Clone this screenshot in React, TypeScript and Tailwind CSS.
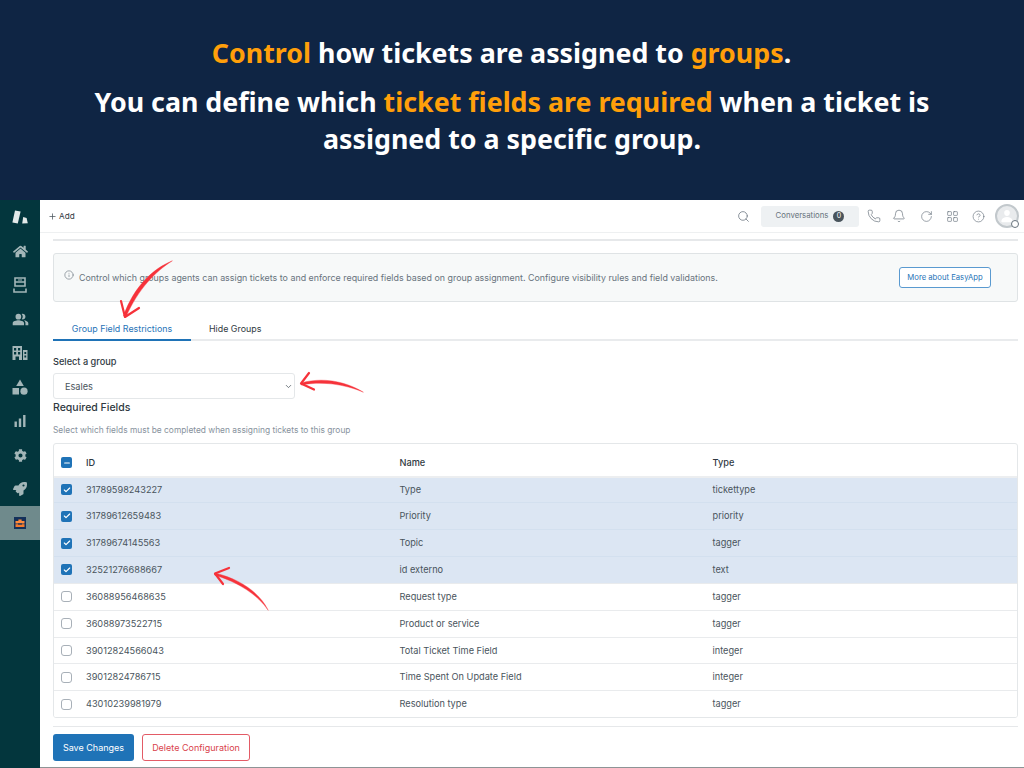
import { Search, Phone, Bell, RotateCw, LayoutGrid, CircleHelp, Info, ChevronDown, Plus, Check, Minus } from "lucide-react";
import { FaHome, FaRocket, FaCog } from "react-icons/fa";
import { MdPeopleAlt } from "react-icons/md";
import { IoPerson } from "react-icons/io5";

const rows = [
  { id: "31789598243227", name: "Type", type: "tickettype", on: true },
  { id: "31789612659483", name: "Priority", type: "priority", on: true },
  { id: "31789674145563", name: "Topic", type: "tagger", on: true },
  { id: "32521276688667", name: "id externo", type: "text", on: true },
  { id: "36088956468635", name: "Request type", type: "tagger", on: false },
  { id: "36088973522715", name: "Product or service", type: "tagger", on: false },
  { id: "39012824566043", name: "Total Ticket Time Field", type: "integer", on: false },
  { id: "39012824786715", name: "Time Spent On Update Field", type: "integer", on: false },
  { id: "43010239981979", name: "Resolution type", type: "tagger", on: false },
];

const Logo = () => (
  <svg width="16" height="14" viewBox="0 0 16 14" fill="#e3e9e9">
    <path d="M3 0.5 L8.6 1.6 L5.8 13.6 L0.4 12.4 Z" />
    <path d="M11.2 7 L14.6 8 L15.8 13.2 L10.2 13.4 Z" />
  </svg>
);

const InboxIcon = () => (
  <svg width="14" height="16" viewBox="0 0 14 16" fill="none" stroke="#a3b6b8" strokeWidth="1.6">
    <path d="M2 1 H12 V9 H2 Z M2 5 H12" />
    <path d="M1 11.5 V15 H13 V11.5" />
    <path d="M5 3 H9" strokeWidth="1" />
  </svg>
);

const BuildingIcon = () => (
  <svg width="16" height="14" viewBox="0 0 16 14" fill="#a3b6b8">
    <path
      fillRule="evenodd"
      d="M0.5 0 H10 V14 H0.5 Z M2 2 V4.5 H4.2 V2 Z M6 2 V4.5 H8.2 V2 Z M2 6 V8.5 H4.2 V6 Z M6 6 V8.5 H8.2 V6 Z M3.5 10.5 V14 H7 V10.5 Z"
    />
    <path fillRule="evenodd" d="M11 4 H15.5 V14 H11 Z M12.4 6 V8 H14.2 V6 Z M12.4 9.5 V11.5 H14.2 V9.5 Z" />
  </svg>
);

const Shapes = () => (
  <svg width="16" height="16" viewBox="0 0 16 16" fill="#a3b6b8">
    <path d="M8 0.5 L11.8 7 L4.2 7 Z" />
    <rect x="0.5" y="9" width="6.5" height="6.5" />
    <circle cx="12" cy="12.2" r="3.6" />
  </svg>
);

const BarsIcon = () => (
  <svg width="12" height="12" viewBox="0 0 12 12" fill="#a3b6b8">
    <rect x="0.5" y="6.5" width="2.4" height="5.5" />
    <rect x="4.8" y="3.5" width="2.4" height="8.5" />
    <rect x="9.1" y="0" width="2.4" height="12" />
  </svg>
);

const ToolboxIcon = () => (
  <svg width="12" height="12" viewBox="0 0 12 12">
    <rect width="12" height="12" fill="#14305a" />
    <path d="M4.4 4 V2.6 H7.6 V4 H10.5 V6.5 H1.5 V4 Z" fill="#ff8a3c" />
    <path d="M1.5 7.2 H10.5 V10 H1.5 Z" fill="#f47a2c" />
    <path d="M4 6.4 H8 V7.6 H4 Z" fill="#14305a" />
  </svg>
);

const Box = ({ on }: { on: boolean }) =>
  on ? (
    <div className="w-[11px] h-[11px] rounded-[2px] bg-[#1f73b7] flex items-center justify-center">
      <Check size={8} strokeWidth={3.5} className="text-white" />
    </div>
  ) : (
    <div className="w-[11px] h-[11px] rounded-[3px] bg-white border border-[#a8b0b8]" />
  );

const SideIcon = ({ children }: { children: React.ReactNode }) => (
  <div className="h-[34px] flex items-center justify-center">{children}</div>
);

export default function App() {
  return (
    <div className="relative w-[1024px] h-[768px] overflow-hidden bg-white font-['Inter',sans-serif]">
      {/* Banner */}
      <div className="h-[200px] bg-[#0f2544] pt-[34px] text-center text-white font-['Noto_Sans',sans-serif] font-bold text-[26.8px] leading-[37px]">
        <p className="mb-[12px] pr-[21px]">
          <span className="text-[#ff9f0a]">Control</span> how tickets are assigned to{" "}
          <span className="text-[#ff9f0a]">groups</span>.
        </p>
        <p>
          You can define which <span className="text-[#ff9f0a]">ticket fields are required</span> when a ticket is
          <br />
          assigned to a specific group.
        </p>
      </div>

      <div className="flex h-[568px]">
        {/* Sidebar */}
        <div className="w-[40px] shrink-0 bg-[#03363d] flex flex-col items-center pt-[5px]">
          <div className="h-[24px] flex items-center justify-center">
            <Logo />
          </div>
          <div className="mt-[5px] flex flex-col items-center text-[#a3b6b8]">
            <SideIcon><FaHome size={15} /></SideIcon>
            <SideIcon><InboxIcon /></SideIcon>
            <SideIcon><MdPeopleAlt size={17} /></SideIcon>
            <SideIcon><BuildingIcon /></SideIcon>
            <SideIcon><Shapes /></SideIcon>
            <SideIcon><BarsIcon /></SideIcon>
            <SideIcon><FaCog size={13} /></SideIcon>
            <SideIcon><FaRocket size={14} /></SideIcon>
          </div>
          <div className="w-[40px] h-[34px] bg-[#6f8a8c] flex items-center justify-center">
            <ToolboxIcon />
          </div>
        </div>

        <div className="flex-1 flex flex-col min-w-0 border-b border-[#8d9496]">
          {/* Top bar */}
          <div className="h-[33px] shrink-0 border-b border-[#eef0f1] flex items-center pl-[8px] pr-[5px] text-[#49545c]">
            <Plus size={9} className="mr-[2px] text-[#49545c]" />
            <span className="text-[8.2px] text-[#2f3941]">Add</span>
            <Search size={13} className="ml-auto text-[#68737d]" strokeWidth={1.4} />
            <div className="ml-[11px] w-[98px] h-[21px] rounded-[3px] bg-[#eef1f3] flex items-center justify-center gap-[5px]">
              <span className="text-[7.8px] text-[#68737d]">Conversations</span>
              <span className="w-[11px] h-[11px] rounded-full bg-[#49545c] text-white text-[7px] flex items-center justify-center">0</span>
            </div>
            <Phone size={14} className="ml-[7.5px] text-[#68737d]" strokeWidth={1.2} />
            <Bell size={14} className="ml-[11.5px] text-[#68737d]" strokeWidth={1.2} />
            <RotateCw size={13} className="ml-[13.5px] text-[#68737d]" strokeWidth={1.2} />
            <LayoutGrid size={13} className="ml-[13px] text-[#68737d]" strokeWidth={1.2} />
            <CircleHelp size={13} className="ml-[13px] text-[#68737d]" strokeWidth={1.2} />
            <div className="relative ml-[10.5px] w-[24px] h-[24px] rounded-full border-2 border-[#c2c8cc] bg-[#e9ebed] flex items-center justify-center">
              <IoPerson size={14} className="text-white" />
              <div className="absolute right-[-2px] bottom-[-2px] w-[8px] h-[8px] rounded-full bg-white border border-[#68737d]" />
            </div>
          </div>

          <div className="flex-1 pl-[13px] pr-[6px] pt-[6px]">
            <div className="h-[2px] bg-[#e6e8ea]" />

            {/* Info box */}
            <div className="mt-[12px] h-[49px] rounded-[3px] border border-[#dfe3e5] bg-[#f7f9f9] flex items-center pl-[10px] pr-[26px]">
              <Info size={10} className="text-[#68737d] mb-[5px] shrink-0" strokeWidth={1.5} />
              <span className="ml-[5px] text-[8.9px] text-[#68737d]">
                Control which groups agents can assign tickets to and enforce required fields based on group assignment. Configure visibility rules and field validations.
              </span>
              <button className="ml-auto shrink-0 w-[92px] h-[21px] rounded-[3px] border border-[#5a9ad0] bg-white text-[7.7px] text-[#1f73b7]">
                More about EasyApp
              </button>
            </div>

            {/* Tabs */}
            <div className="mt-[12px] h-[27px] border-b-2 border-[#e9ebed] flex">
              <div className="w-[138px] h-[27px] border-b-2 border-[#1f73b7] flex items-center justify-center text-[8.9px] text-[#1f73b7] pt-[4px]">
                Group Field Restrictions
              </div>
              <div className="ml-[18px] h-[25px] flex items-center text-[8.9px] text-[#2f3941] pt-[5px]">Hide Groups</div>
            </div>

            <div className="mt-[15px] text-[9.2px] leading-[12px] font-medium text-[#2f3941]">Select a group</div>
            <div className="mt-[5px] w-[242px] h-[26px] rounded-[3px] border border-[#e4e7e9] bg-white flex items-center pl-[11px] pr-[1px] pt-[1px] text-[9.2px] text-[#49545c]">
              Esales
              <ChevronDown size={9} className="ml-auto text-[#49545c]" />
            </div>
            <div className="mt-[2px] text-[10.5px] leading-[14px] font-medium text-[#2f3941]">Required Fields</div>
            <div className="mt-[9px] text-[8.4px] leading-[12px] text-[#87929d]">Select which fields must be completed when assigning tickets to this group</div>

            {/* Table */}
            <div className="mt-[7px] rounded-[3px] border border-[#e4e7e9] text-[9.2px] overflow-hidden">
              <div className="h-[31.5px] pt-[6px] flex items-center font-medium text-[#2f3941]">
                <div className="w-[32px] pl-[7px]">
                  <div className="w-[11px] h-[11px] rounded-[2px] bg-[#1f73b7] flex items-center justify-center">
                    <Minus size={8} strokeWidth={3.5} className="text-white" />
                  </div>
                </div>
                <div className="w-[313.5px]">ID</div>
                <div className="w-[313px]">Name</div>
                <div>Type</div>
              </div>
              {rows.map((r, i) => (
                <div
                  key={r.id}
                  className={`h-[26.85px] flex items-center text-[#49545c] ${r.on ? "bg-[#dce6f3]" : "bg-white"} ${i === 0 ? "border-t-2 border-[#eceef0]" : r.on ? "border-t border-[#d3e0ef]" : "border-t border-[#e9ebed]"}`}
                >
                  <div className="w-[32px] pl-[7px]">
                    <Box on={r.on} />
                  </div>
                  <div className="w-[313.5px]">{r.id}</div>
                  <div className="w-[313px]">{r.name}</div>
                  <div>{r.type}</div>
                </div>
              ))}
            </div>

            <div className="mt-[8px] h-[1px] bg-[#e6e8ea]" />
            <div className="mt-[7px] flex gap-[8px]">
              <button className="w-[81px] h-[27px] rounded-[3px] bg-[#1f73b7] text-white text-[9px]">Save Changes</button>
              <button className="w-[108px] h-[27px] rounded-[3px] border border-[#e35b66] bg-white text-[#d93f4c] text-[9px]">Delete Configuration</button>
            </div>
          </div>
        </div>
      </div>

      {/* Red hand-drawn arrows over the page */}
      <svg className="absolute inset-0 pointer-events-none" width="1024" height="768" viewBox="0 0 1024 768" fill="#f6323a" stroke="#f6323a" strokeLinecap="round" strokeLinejoin="round">
        <path strokeWidth="0.4" d="M172 261 C154 268 134 286 123.5 316 L126 317 C138 289 156 271 172 261 Z" />
        <path strokeWidth="2.2" fill="none" d="M121 301 L125 317 L139 308" />
        <path strokeWidth="0.4" d="M363 392 C345 381 322 377 301 383 L301 385 C322 381 344 384 363 392 Z" />
        <path strokeWidth="2.2" fill="none" d="M309 373 L301 383.5 L314 389.5" />
        <path strokeWidth="0.4" d="M268 610 C260 593 240 579 215 573 L214.5 575 C238 582 258 595 268 610 Z" />
        <path strokeWidth="2.2" fill="none" d="M229 568 L215 573.5 L223 584" />
      </svg>
    </div>
  );
}
